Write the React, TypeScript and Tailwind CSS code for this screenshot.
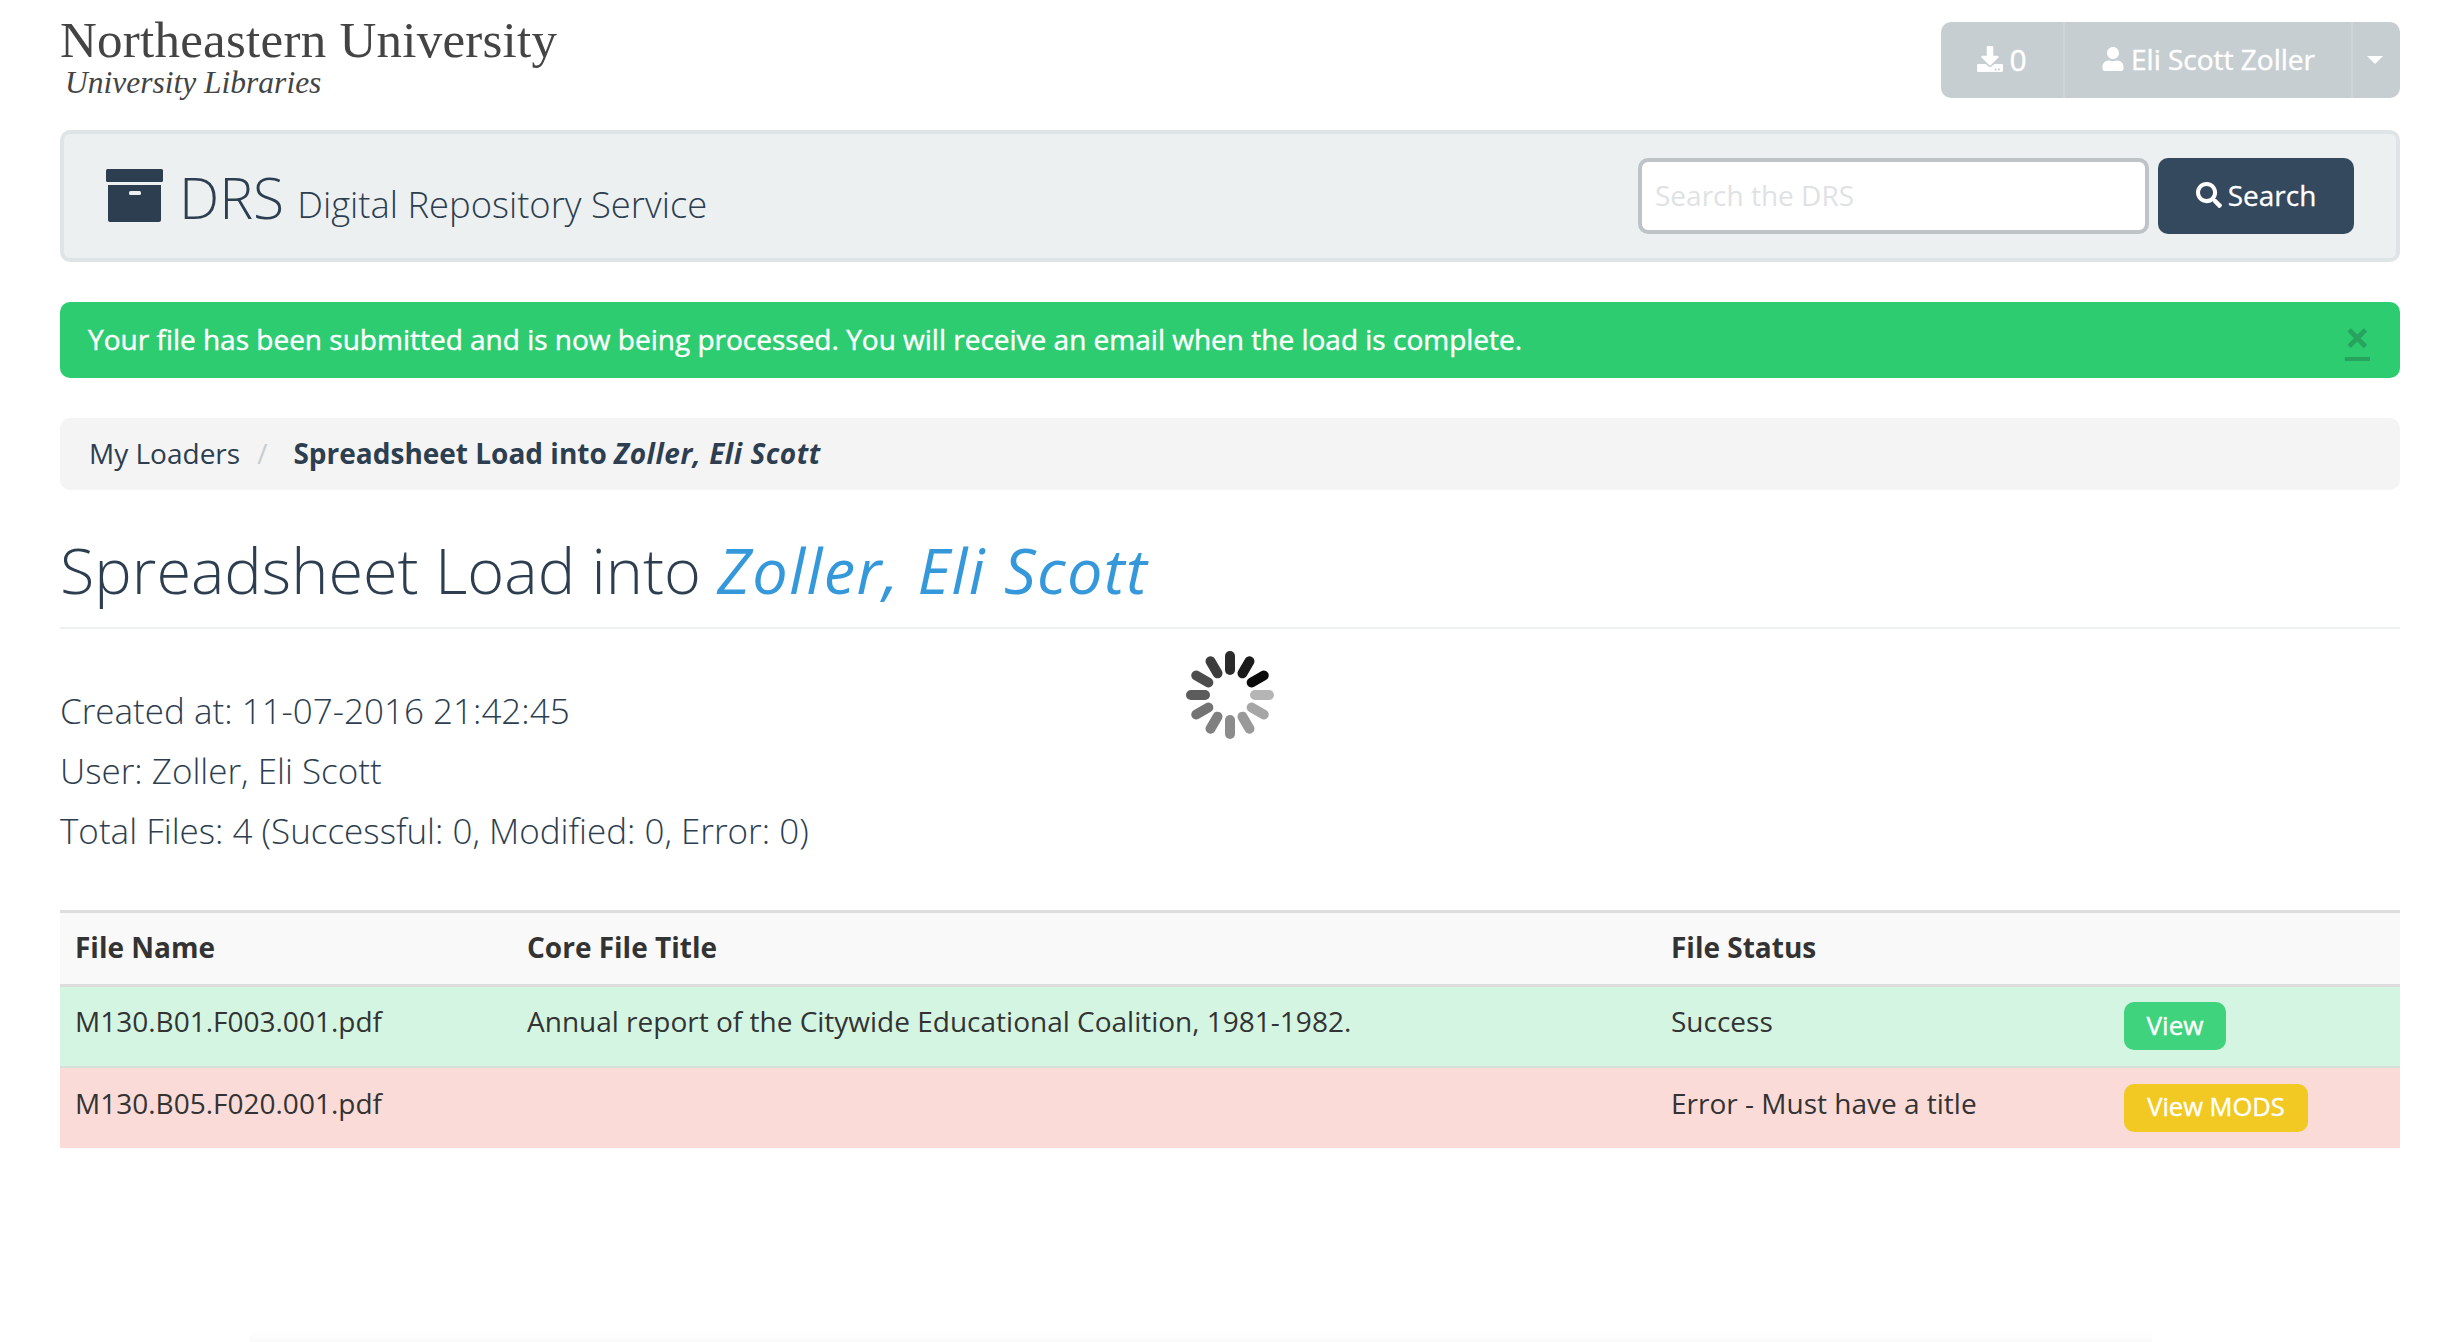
import React from "react";
import { FaDownload, FaUser, FaSearch } from "react-icons/fa";

const font = { fontFamily: '"Open Sans", "Noto Sans", sans-serif' };

function Spinner() {
  const shades = ["#2b2b2b", "#1b1b1b", "#0a0a0a", "#b5b5b5", "#a6a6a6", "#999999", "#8c8c8c", "#808080", "#737373", "#5c5c5c", "#4d4d4d", "#3d3d3d"];
  return (
    <svg className="absolute left-[1186px] top-[651px]" width="88" height="88" viewBox="0 0 88 88">
      {shades.map((c, i) => (
        <rect key={i} x="39" y="0" width="10" height="24" rx="5" fill={c} transform={`rotate(${i * 30} 44 44)`} />
      ))}
    </svg>
  );
}

function ArchiveIcon() {
  return (
    <svg width="58" height="54" viewBox="0 0 58 54" fill="#2c3e50">
      <rect x="0" y="0" width="57" height="13" rx="1.5" />
      <path d="M2 16h53v35a2 2 0 0 1-2 2H4a2 2 0 0 1-2-2z" />
      <rect x="23" y="22" width="12" height="4" rx="1.5" fill="#ecf0f1" />
    </svg>
  );
}

export default function App() {
  return (
    <div className="relative h-[1342px] w-[2452px] overflow-hidden bg-white text-[#2c3e50]" style={font}>
      <Spinner />
      <div className="ml-[60px] w-[2340px]">
        <header className="flex h-[130px] items-start justify-between">
          <div className="pt-[13px] text-[#444]" style={{ fontFamily: '"Liberation Serif", serif' }}>
            <div className="text-[51px] leading-[54px] tracking-[0.25px]">Northeastern University</div>
            <div className="pl-[5px] pt-[1px] text-[31.5px] italic leading-[30px]">University Libraries</div>
          </div>
          <div className="mt-[22px] flex h-[76px] items-center rounded-[10px] bg-[#c7ced1] text-[28px] text-white [-webkit-text-stroke:0.4px_white]">
            <div className="flex h-full w-[124px] items-center justify-center gap-[6px] border-r-2 border-[#cfd5d8] pb-[2px]">
              <FaDownload className="text-[26px]" />
              <span className="text-[30px]">0</span>
            </div>
            <div className="flex h-full w-[288px] items-center justify-center gap-[6px] border-r-2 border-[#cfd5d8] pb-[2px]">
              <FaUser className="text-[24px]" />
              <span>Eli Scott Zoller</span>
            </div>
            <div className="flex h-full w-[47px] items-center justify-center pr-[4px]">
              <div className="h-0 w-0 border-x-[8px] border-t-[8px] border-x-transparent border-t-white" />
            </div>
          </div>
        </header>

        <nav className="flex h-[132px] items-center justify-between rounded-[10px] border-4 border-[#dfe5e7] bg-[#ecf0f1] pl-[42px] pr-[42px]">
          <div className="flex items-center">
            <ArchiveIcon />
            <span className="ml-[15px] mt-[3px] text-[57px] font-light leading-none">DRS</span>
            <span className="ml-[13px] mt-[16px] text-[36.4px] font-light leading-none">Digital Repository Service</span>
          </div>
          <div className="flex items-center gap-[9px]">
            <div className="flex h-[76px] w-[511px] items-center rounded-[10px] border-4 border-[#bdc3c7] bg-white pb-[2px] pl-[13px] text-[28px] text-[#dfe2e4]">
              Search the DRS
            </div>
            <button className="flex h-[76px] w-[196px] items-center justify-center gap-[6px] rounded-[10px] bg-[#34495e] pb-[2px] text-[28px] text-white [-webkit-text-stroke:0.3px_white]">
              <FaSearch className="text-[26px]" />
              Search
            </button>
          </div>
        </nav>

        <div className="mt-[40px] flex h-[76px] items-center justify-between rounded-[10px] bg-[#2ecc71] pb-[2px] pl-[28px] pr-[30px] text-[28px] text-white">
          <span className="[-webkit-text-stroke:0.4px_white]">Your file has been submitted and is now being processed. You will receive an email when the load is complete.</span>
          <span className="mb-[4px] text-[44px] font-bold leading-none text-[#27a35e] underline">×</span>
        </div>

        <div className="mt-[40px] flex h-[72px] items-center rounded-[10px] bg-[#f4f4f4] pb-[2px] pl-[29px] text-[28px]">
          <span>My Loaders</span>
          <span className="ml-[17px] mr-[26px] text-[#c8cdd0]">/</span>
          <span className="font-bold text-[#2c3e50]">
            Spreadsheet Load into <em className="tracking-[0.55px]">Zoller, Eli Scott</em>
          </span>
        </div>

        <div className="mt-[38px] border-b-2 border-[#eef0f1] pb-[16px]">
          <h1 className="text-[63px] font-light leading-[83px]">
            Spreadsheet Load into <em className="font-normal tracking-[1.4px] text-[#3498db]">Zoller, Eli Scott</em>
          </h1>
        </div>

        <div className="mt-[52px] text-[35px] font-light leading-[60px]">
          <div>Created at: 11-07-2016 21:42:45</div>
          <div>User: Zoller, Eli Scott</div>
          <div>Total Files: 4 (Successful: 0, Modified: 0, Error: 0)</div>
        </div>

        <table className="mt-[49px] w-[2340px] table-fixed border-collapse text-left text-[28px] text-[#333]">
          <colgroup>
            <col className="w-[452px]" />
            <col className="w-[1144px]" />
            <col className="w-[453px]" />
            <col />
          </colgroup>
          <thead>
            <tr className="h-[74px] border-y-[3px] border-[#dddddd] bg-[#f9f9f9]">
              <th className="pb-[3px] pl-[15px] font-bold">File Name</th>
              <th className="pb-[3px] pl-[15px] font-bold">Core File Title</th>
              <th className="pb-[3px] pl-[15px] font-bold">File Status</th>
              <th />
            </tr>
          </thead>
          <tbody>
            <tr className="h-[81px] border-b-2 border-[#d6e0da] bg-[#d5f5e3]">
              <td className="pb-[10px] pl-[15px]">M130.B01.F003.001.pdf</td>
              <td className="pb-[10px] pl-[15px]">Annual report of the Citywide Educational Coalition, 1981-1982.</td>
              <td className="pb-[10px] pl-[15px]">Success</td>
              <td className="pl-[15px]">
                <button className="h-[48px] w-[102px] rounded-[10px] bg-[#3fd37e] pb-[2px] text-[26px] text-white [-webkit-text-stroke:0.4px_white]">View</button>
              </td>
            </tr>
            <tr className="h-[81px] bg-[#fadbd8]">
              <td className="pb-[10px] pl-[15px]">M130.B05.F020.001.pdf</td>
              <td />
              <td className="pb-[10px] pl-[15px]">Error - Must have a title</td>
              <td className="pl-[15px]">
                <button className="h-[48px] w-[184px] rounded-[10px] bg-[#f1c922] pb-[2px] text-[25.5px] text-white [-webkit-text-stroke:0.4px_white]">View MODS</button>
              </td>
            </tr>
          </tbody>
        </table>
      </div>
      <div className="absolute bottom-0 left-[250px] right-[300px] h-[12px] bg-gradient-to-b from-white to-[#fafafa]" />
    </div>
  );
}
